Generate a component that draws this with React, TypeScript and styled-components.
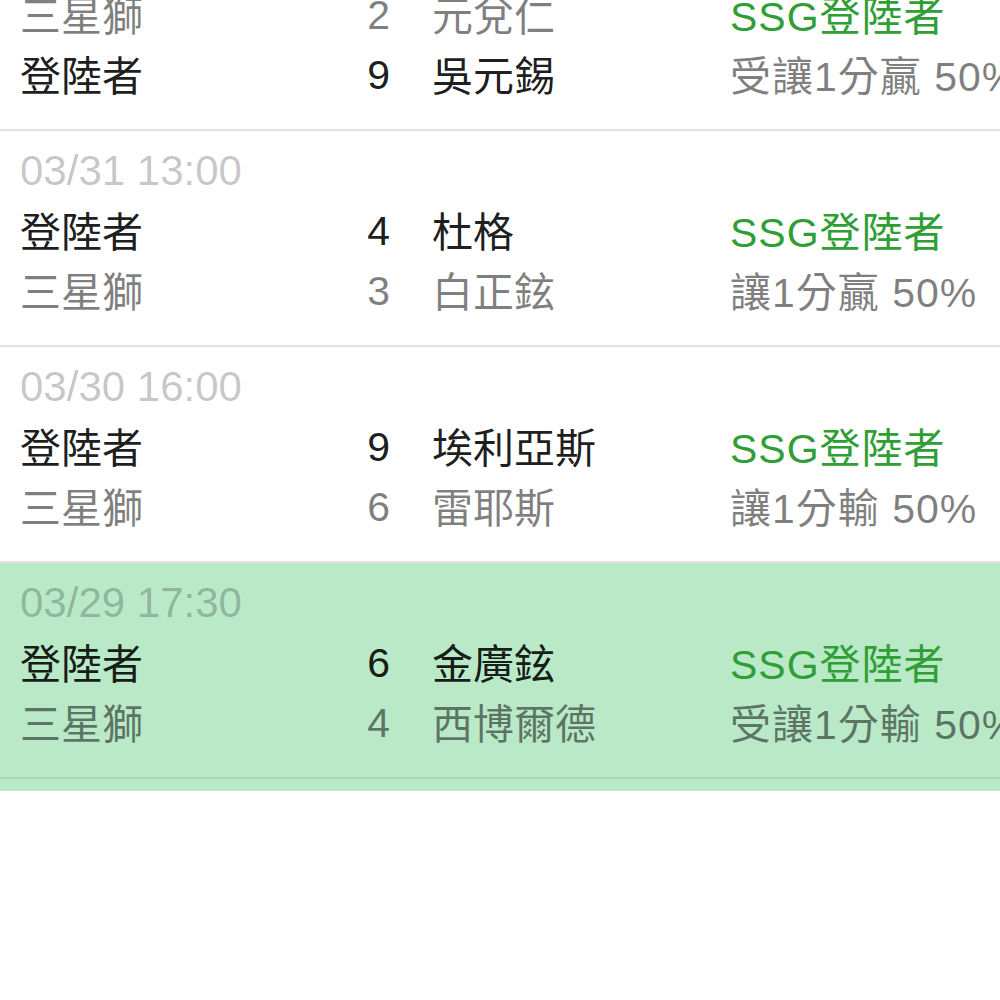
import React from "react";
import styled, { createGlobalStyle } from "styled-components";

const GlobalStyle = createGlobalStyle`
  html, body {
    margin: 0;
    padding: 0;
    background: #fff;
    overflow: hidden;
  }
  body {
    font-family: "Liberation Sans", "Noto Sans CJK TC", sans-serif;
  }
`;

const games = [
  {
    date: "04/01 18:30",
    lines: [
      { team: "三星獅", score: 2, pitcher: "元兌仁", note: "SSG登陸者", win: false, pick: true },
      { team: "登陸者", score: 9, pitcher: "吳元錫", note: "受讓1分贏 50%", win: true, pick: false },
    ],
  },
  {
    date: "03/31 13:00",
    lines: [
      { team: "登陸者", score: 4, pitcher: "杜格", note: "SSG登陸者", win: true, pick: true },
      { team: "三星獅", score: 3, pitcher: "白正鉉", note: "讓1分贏 50%", win: false, pick: false },
    ],
  },
  {
    date: "03/30 16:00",
    lines: [
      { team: "登陸者", score: 9, pitcher: "埃利亞斯", note: "SSG登陸者", win: true, pick: true },
      { team: "三星獅", score: 6, pitcher: "雷耶斯", note: "讓1分輸 50%", win: false, pick: false },
    ],
  },
  {
    date: "03/29 17:30",
    active: true,
    lines: [
      { team: "登陸者", score: 6, pitcher: "金廣鉉", note: "SSG登陸者", win: true, pick: true },
      { team: "三星獅", score: 4, pitcher: "西博爾德", note: "受讓1分輸 50%", win: false, pick: false },
    ],
  },
];

const App = () => {
  return (
    <>
      <GlobalStyle />
      <List>
        {games.map((g) => (
          <Game key={g.date} $active={g.active}>
            <DateText>{g.date}</DateText>
            {g.lines.map((l) => (
              <Line key={l.team}>
                <Cell $win={l.win}>{l.team}</Cell>
                <Score $win={l.win}>{l.score}</Score>
                <Cell $win={l.win}>{l.pitcher}</Cell>
                <Note $pick={l.pick}>{l.note}</Note>
              </Line>
            ))}
            <Divider $active={g.active} />
          </Game>
        ))}
      </List>
    </>
  );
};

export default App;

// list is scrolled so the first game is partly above the top edge
const List = styled.div`
  margin-top: -85px;
  width: 1000px;
  overflow: hidden;
`;

const Game = styled.section`
  display: flex;
  flex-direction: column;
  padding-top: 18px;
  padding-bottom: ${(p) => (p.$active ? "12px" : "0")};
  background-color: ${(p) => (p.$active ? "#b9e9c7" : "#fff")};
`;

const DateText = styled.div`
  padding-left: 20px;
  height: 44px;
  line-height: 44px;
  margin-bottom: 6px;
  font-size: 42px;
  color: rgba(0, 0, 0, 0.23);
`;

const Line = styled.div`
  display: grid;
  grid-template-columns: 330px 40px 340px 1fr;
  padding-left: 20px;
  height: 60px;
  align-items: center;
  font-size: 41px;
  white-space: nowrap;
`;

const Cell = styled.div`
  color: ${(p) => (p.$win ? "rgba(0, 0, 0, 0.9)" : "rgba(0, 0, 0, 0.5)")};
`;

const Score = styled(Cell)`
  text-align: right;
  padding-top: 4px;
  & + div {
    padding-left: 42px;
  }
`;

const Note = styled.div`
  letter-spacing: 1px;
  color: ${(p) => (p.$pick ? "#2e9e35" : "rgba(0, 0, 0, 0.5)")};
`;

const Divider = styled.div`
  margin-top: 26px;
  height: 2px;
  background-color: ${(p) => (p.$active ? "#a7d7b3" : "#e3e3e3")};
`;
